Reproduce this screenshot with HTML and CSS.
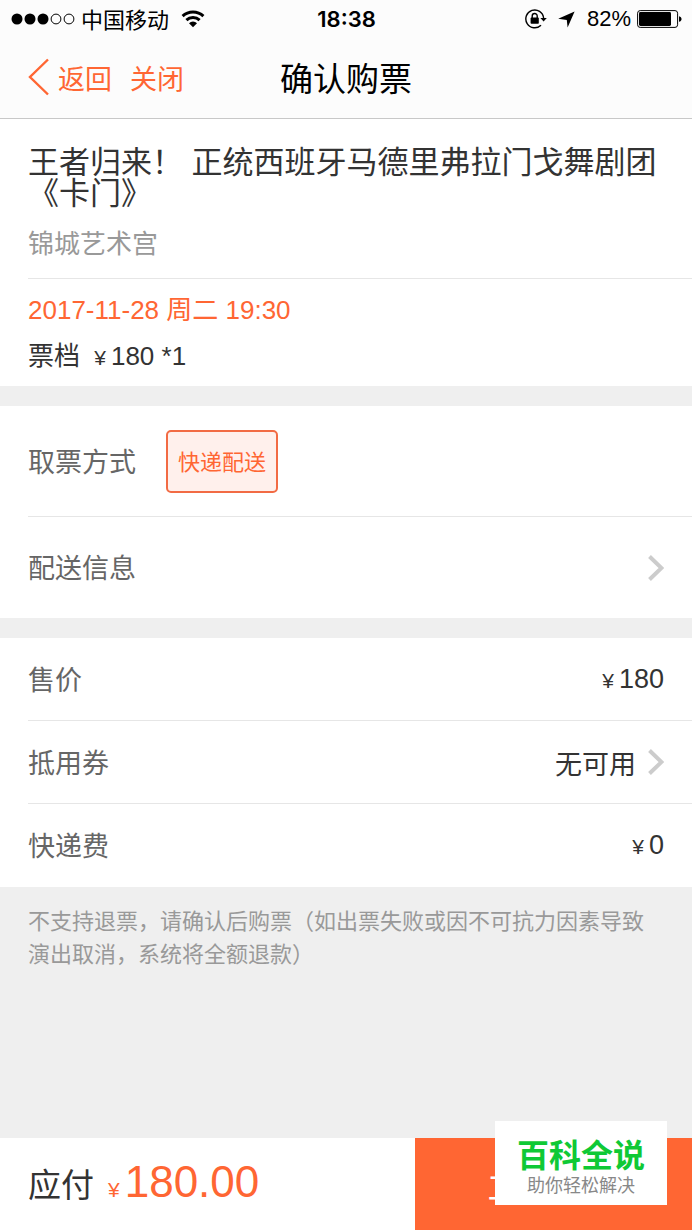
FILE: index.html
```html
<!DOCTYPE html>
<html lang="zh-CN">
<head>
<meta charset="utf-8">
<meta name="viewport" content="width=device-width, initial-scale=1">
<title>确认购票</title>
<link rel="stylesheet" href="styles.css">
</head>
<body>
<header class="top">
  <div class="status">
    <div class="status-left">
      <svg class="signal" width="64" height="12" viewBox="0 0 64 12" aria-hidden="true">
        <circle cx="6" cy="6" r="5.5"/><circle cx="19" cy="6" r="5.5"/><circle cx="32" cy="6" r="5.5"/>
        <circle class="empty" cx="45" cy="6" r="4.9"/><circle class="empty" cx="58" cy="6" r="4.9"/>
      </svg>
      <span class="carrier">中国移动</span>
      <svg class="wifi" width="24" height="18" viewBox="0 0 24 18" aria-hidden="true">
        <path class="arc" d="M1.6 6.2a15 15 0 0 1 20.8 0M5.4 10.2a9.6 9.6 0 0 1 13.2 0"/>
        <path d="M12 17.2l-4-4a5.8 5.8 0 0 1 8 0z"/>
      </svg>
    </div>
    <time class="clock">18:38</time>
    <div class="status-right">
      <svg width="22" height="20" viewBox="0 0 22 20" aria-hidden="true">
        <path class="ring" d="M16 16.2A8.9 8.9 0 1 1 18.6 9"/>
        <path d="M15.4 9h6.4l-3.2 3.6z"/>
        <rect x="5.6" y="8.6" width="8.2" height="6.2" rx="0.8"/>
        <path class="shackle" d="M7.2 9V7a2.5 2.5 0 0 1 5 0v2"/>
      </svg>
      <svg class="locate" width="17" height="17" viewBox="0 0 17 17" aria-hidden="true">
        <path d="M16.6.4L9.6 16.4 8.8 9 .2 7.8z"/>
      </svg>
      <span class="percent">82%</span>
      <svg width="45" height="18" viewBox="0 0 45 18" aria-hidden="true">
        <rect class="shell" x="0.6" y="0.6" width="40" height="16.8" rx="2.6"/>
        <rect x="2" y="2" width="32" height="14" rx="1.4"/>
        <path d="M42 6.2c3.4.6 3.4 5 0 5.6z"/>
      </svg>
    </div>
  </div>
  <nav class="nav">
    <div class="nav-actions">
      <button class="nav-btn" type="button">
        <svg width="22" height="38" viewBox="0 0 22 38" aria-hidden="true"><path d="M20 1.5L2 19l18 17.5"/></svg>
        返回
      </button>
      <button class="nav-btn" type="button">关闭</button>
    </div>
    <h1 class="nav-title">确认购票</h1>
  </nav>
</header>

<main class="content">
  <section class="card">
    <div class="show divided">
      <h2 class="show-title">王者归来！ 正统西班牙马德里弗拉门戈舞剧团《卡门》</h2>
      <p class="venue">锦城艺术宫</p>
    </div>
    <div class="session">
      <p class="date">2017-11-28 周二 19:30</p>
      <p class="tier">票档 <span class="price"><span class="yen">¥</span>180</span> *1</p>
    </div>
  </section>

  <section class="card">
    <div class="row row-method divided">
      <span class="label">取票方式</span>
      <button class="chip" type="button" aria-pressed="true">快递配送</button>
    </div>
    <a class="row row-info" href="#delivery">
      <span class="label">配送信息</span>
      <span class="value"><svg class="chevron" width="16" height="26" viewBox="0 0 16 26" aria-hidden="true"><path d="M1.5 1.5L13.5 13l-12 11.5"/></svg></span>
    </a>
  </section>

  <section class="card">
    <div class="row divided">
      <span class="label">售价</span>
      <span class="value price"><span class="yen">¥</span>180</span>
    </div>
    <a class="row divided" href="#coupon">
      <span class="label">抵用券</span>
      <span class="value">无可用 <svg class="chevron" width="16" height="26" viewBox="0 0 16 26" aria-hidden="true"><path d="M1.5 1.5L13.5 13l-12 11.5"/></svg></span>
    </a>
    <div class="row">
      <span class="label">快递费</span>
      <span class="value price"><span class="yen">¥</span>0</span>
    </div>
  </section>

  <p class="notice">不支持退票，请确认后购票（如出票失败或因不可抗力因素导致演出取消，系统将全额退款）</p>
</main>

<footer class="pay">
  <div class="total">
    <span class="total-label">应付</span>
    <span class="total-sum price"><span class="yen">¥</span>180.00</span>
  </div>
  <button class="submit" type="button">立即支付</button>
  <aside class="watermark">
    <strong class="wm-name">百科全说</strong>
    <span class="wm-line">助你轻松解决</span>
  </aside>
</footer>
</body>
</html>
```
FILE: styles.css
```css
* {
  box-sizing: border-box;
}

body {
  margin: 0;
  min-height: 100vh;
  display: flex;
  flex-direction: column;
  background: #efefef;
  color: #333;
  font-family: "Liberation Sans", "Noto Sans CJK SC", sans-serif;
}

h1, h2, p {
  margin: 0;
  font-weight: 400;
}

button {
  margin: 0;
  padding: 0;
  border: 0;
  background: none;
  font: inherit;
  color: inherit;
}

a {
  color: inherit;
  text-decoration: none;
}

svg {
  display: block;
  flex: none;
}

.top {
  background: #fcfcfc;
  color: #000;
  border-bottom: 1px solid #c8c8c8;
}

.status {
  display: grid;
  grid-template-columns: 1fr auto 1fr;
  align-items: center;
  height: 38px;
  padding: 0 10px 0 11px;
  font-size: 22px;
}

.status-left, .status-right {
  display: flex;
  align-items: center;
}

.status-left {
  gap: 8px;
}

.signal {
  margin-right: -2px;
}

.carrier {
  padding-bottom: 3px;
}

.wifi {
  margin-left: 4px;
}

.empty {
  fill: none;
  stroke: #000;
}

.arc {
  fill: none;
  stroke: #000;
  stroke-width: 3;
}

.clock {
  font-family: Inter, sans-serif;
  font-weight: 600;
}

.status-right {
  justify-content: flex-end;
}

.ring, .shackle {
  fill: none;
  stroke: #000;
  stroke-width: 1.4;
}

.locate {
  margin: 0 12px 0 11px;
}

.percent {
  margin-right: 6px;
}

.shell {
  fill: none;
  stroke: #000;
}

.nav {
  display: grid;
  grid-template-columns: 1fr auto 1fr;
  align-items: center;
  height: 80px;
  padding: 0 28px 2px;
}

.nav-actions {
  display: flex;
  gap: 18px;
  color: #ff6633;
  font-size: 27px;
}

.nav-btn {
  display: flex;
  align-items: center;
  gap: 8px;
}

.nav-btn path {
  fill: none;
  stroke: #ff6633;
  stroke-width: 2.4;
}

.nav-title {
  font-size: 33px;
}

.card {
  background: #fff;
  margin-bottom: 20px;
}

.divided {
  border-bottom: 1px solid #e6e6e6;
}

.show {
  margin-left: 28px;
  padding: 28px 28px 15px 0;
}

.show-title {
  font-size: 31px;
  line-height: 31px;
}

.venue {
  margin-top: 16px;
  color: #999;
  font-size: 26px;
  line-height: 38px;
}

.session {
  padding: 8px 28px 5px;
  font-size: 26px;
  line-height: 46px;
}

.date {
  color: #ff6633;
}

.tier .price {
  margin-left: 7px;
}

.yen {
  margin-right: 5px;
  font-size: 21px;
}

.row {
  display: flex;
  align-items: center;
  min-height: 83px;
  margin-left: 28px;
  padding-right: 28px;
  font-size: 27px;
}

.row-method {
  min-height: 111px;
  gap: 30px;
}

.row-info {
  min-height: 101px;
}

.label {
  padding-bottom: 2px;
  color: #666;
}

.value {
  display: flex;
  align-items: center;
  gap: 12px;
  margin-left: auto;
}

.value.price {
  align-items: baseline;
  gap: 0;
}

.chevron path {
  fill: none;
  stroke: #ccc;
  stroke-width: 4;
}

.chip {
  height: 63px;
  padding: 0 10px 2px;
  border: 2px solid #f26b44;
  border-radius: 5px;
  background: #fff0ec;
  color: #ff6633;
  font-size: 22px;
}

.card:nth-of-type(3) {
  margin-bottom: 0;
}

.notice {
  padding: 18px 28px;
  color: #999;
  font-size: 22px;
  line-height: 33px;
}

.pay {
  position: relative;
  display: flex;
  min-height: 92px;
  margin-top: auto;
  background: #fff;
}

.total {
  flex: 0 0 60%;
  display: flex;
  align-items: baseline;
  gap: 14px;
  padding: 18px 0 0 28px;
  line-height: 52px;
}

.total-label {
  font-size: 33px;
}

.total-sum {
  color: #ff6633;
  font-size: 44px;
}

.submit {
  flex: 1;
  background: #ff6633;
  color: #fff;
  font-size: 33px;
}

.watermark {
  position: absolute;
  right: 25px;
  bottom: 25px;
  display: flex;
  flex-direction: column;
  align-items: center;
  padding: 16px 22px 8px;
  background: #fff;
}

.wm-name {
  color: #0fc935;
  font-size: 32px;
  line-height: 38px;
}

.wm-line {
  color: #888;
  font-size: 18px;
  line-height: 22px;
}
```
